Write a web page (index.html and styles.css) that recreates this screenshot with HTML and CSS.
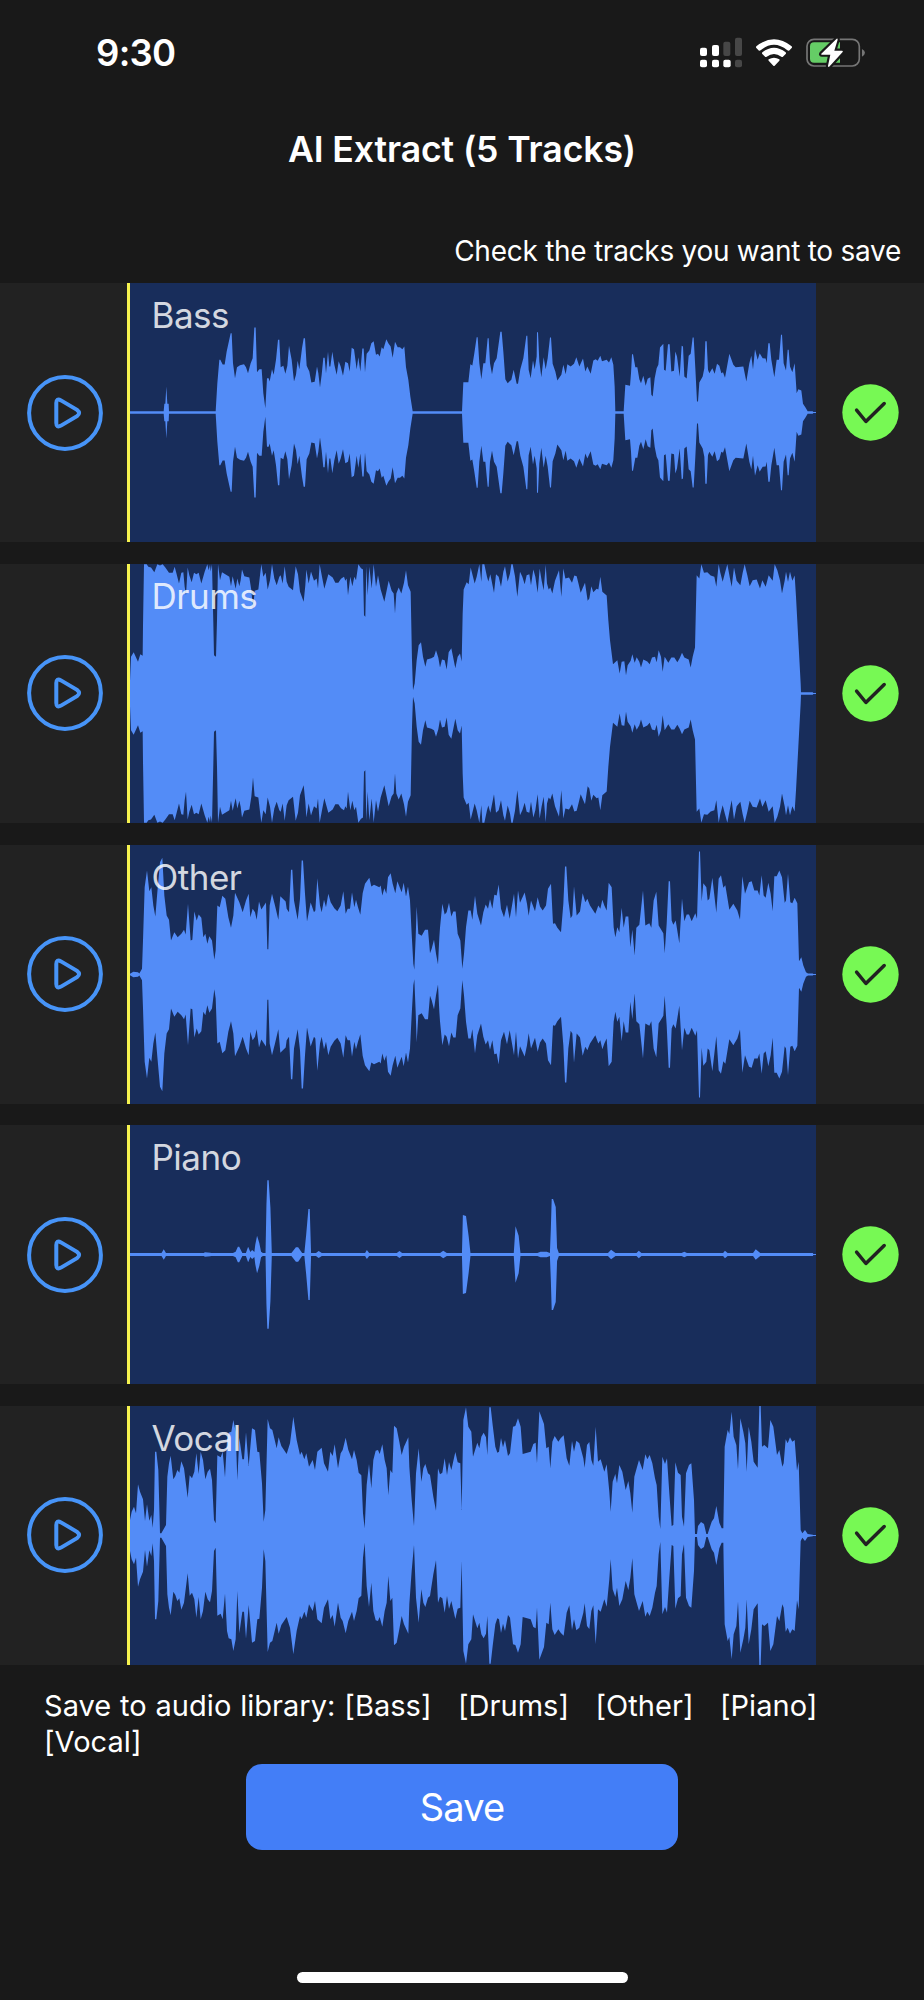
FILE: index.html
```html
<!DOCTYPE html>
<html lang="en">
<head>
<meta charset="utf-8">
<title>AI Extract</title>
<link rel="stylesheet" href="styles.css">
</head>
<body>
<div class="screen">
  <header class="status">
    <span class="time">9:30</span>
    <div class="status-icons">
      <svg class="signal" viewBox="60 50 126 93">
        <g fill="#fff"><rect x="60" y="82" width="21" height="25" rx="6"/><rect x="96" y="74" width="21" height="33" rx="6"/><rect x="60" y="118" width="21" height="23" rx="6"/><rect x="96" y="118" width="21" height="23" rx="6"/><rect x="130" y="118" width="22" height="23" rx="6"/></g>
        <g fill="#474747"><rect x="130" y="64" width="21" height="43" rx="6"/><rect x="165" y="52" width="21" height="55" rx="6"/><rect x="165" y="118" width="21" height="23" rx="6"/></g>
      </svg>
      <svg class="wifi" viewBox="228 50 108 93" fill="#fff">
        <path d="M229 78Q282 36 335 78Q337 81 335 83L327 91Q325 92 322 90Q282 57 242 90Q239 92 237 91L229 83Q227 81 229 78Z"/>
        <path d="M247 96Q282 69 317 96Q319 99 317 101L308 110Q306 111 304 109Q282 93 260 109Q258 111 256 110L247 101Q245 99 247 96Z"/>
        <path d="M266 117Q282 107 298 117Q300 119 298 121L284 136Q282 138 280 136L266 121Q264 119 266 117Z"/>
      </svg>
      <svg class="battery" viewBox="378 50 178 93">
        <rect x="381" y="57" width="157" height="80" rx="21" fill="none" stroke="#767676" stroke-width="5"/>
        <path d="M546 86Q555 91 555 97T546 109Z" fill="#767676"/>
        <path d="M402 66H480V127H402Q390 127 390 115V78Q390 66 402 66Z" fill="#65cd66"/>
        <path d="M470 55L424 100Q422 103 426 103H451L444 137Q445 142 449 138L488 95Q490 91 486 91H463L473 58Q473 53 470 55Z" fill="#fff" stroke="#191919" stroke-width="13" stroke-linejoin="round" paint-order="stroke"/>
      </svg>
    </div>
  </header>
  <h1 class="title">AI Extract (5 Tracks)</h1>
  <p class="hint">Check the tracks you want to save</p>
  <main class="tracks" id="tracks"></main>
  <footer class="footer">
    <p class="selection">Save to audio library: [Bass]&nbsp;&nbsp; [Drums]&nbsp;&nbsp; [Other]&nbsp;&nbsp; [Piano]&nbsp;&nbsp; [Vocal]</p>
    <button class="save">Save</button>
  </footer>
  <div class="home"></div>
</div>
<template id="track">
  <section class="track">
    <div class="play"><svg viewBox="0 0 76 76" fill="none" stroke="#4794f8" stroke-width="4"><circle cx="38" cy="38" r="35.9"/><path d="M29.3 28.1V47.9Q29.3 53.2 34 50.6L50 41.2Q54.2 38 50 34.8L34 25.4Q29.3 22.8 29.3 28.1Z"/></svg></div>
    <div class="playhead"></div>
    <div class="clip"><svg class="wave" viewBox="0 0 2058 777" preserveAspectRatio="none"><path fill="#538cf7"/></svg><span class="name"></span></div>
    <div class="check"><svg viewBox="0 0 57 57"><circle cx="28.5" cy="28.5" r="28.2" fill="#77f954"/><path d="M14.6 26.2L23.9 37.5L42.2 19.5" fill="none" stroke="#222" stroke-width="3.5" stroke-linecap="round" stroke-linejoin="round"/></svg></div>
  </section>
</template>
<script src="waves.js"></script>
</body>
</html>
```
FILE: styles.css
```css
body { margin: 0; background: #191919; color: #fff; font-family: Inter, "Liberation Sans", sans-serif; }
.screen { width: 924px; height: 2000px; display: flex; flex-direction: column; overflow: hidden; }
.status { display: flex; justify-content: space-between; align-items: flex-start; height: 98px; padding: 30px 59px 0 96px; }
.time { font-size: 36.5px; line-height: 46px; font-weight: 600; letter-spacing: -0.7px; }
.status-icons { display: flex; gap: 14px; padding-top: 6.7px; }
.status-icons svg { height: 31px; display: block; }
.signal { width: 42px; }
.wifi { width: 36px; }
.battery { width: 59.3px; }
.title { margin: 0; font-size: 35.6px; line-height: 44px; font-weight: 600; text-align: center; letter-spacing: -0.1px; }
.hint { margin: 61.3px 23px 13.9px; font-size: 28px; line-height: 36px; text-align: right; white-space: nowrap; letter-spacing: -0.27px; }
.tracks { display: flex; flex-direction: column; gap: 21.7px; }
.track { display: grid; grid-template-columns: 127px 3px 686px 108px; height: 259px; background: #222; }
.play { display: flex; align-items: center; padding-left: 27px; }
.play svg { width: 76px; height: 76px; }
.playhead { background: #f6f34f; }
.clip { position: relative; background: #182d5b; }
.wave { display: block; width: 686px; height: 259px; }
.name { position: absolute; left: 21.5px; top: 10.2px; font-size: 35px; line-height: 44px; letter-spacing: -0.5px; color: rgba(255, 255, 255, 0.82); }
.check { display: flex; align-items: center; justify-content: center; }
.check svg { width: 57px; height: 57px; }
.footer { display: flex; flex-direction: column; align-items: center; padding-top: 22.8px; }
.selection { align-self: stretch; margin: 0 60px 4px 44px; font-size: 29px; line-height: 36px; letter-spacing: 0.04px; word-spacing: 0.6px; }
.save { width: 432px; height: 86px; border: 0; border-radius: 16px; background: #437ef7; color: #fff; font: 400 38px/46px Inter, "Liberation Sans", sans-serif; letter-spacing: -0.9px; }
.home { width: 331px; height: 11px; border-radius: 6px; background: #fff; margin: auto auto 17px; }
```
FILE: waves.js
```javascript
// Envelope points are "x,y" pairs of the upper edge; the lower edge mirrors them around mid.
const tracks = [
  { name: "Bass", mid: 398, parts: [
    { dx: -390, sx: 1, p: "390,394 491,394 493,372 496,372 499,320 502,372 506,372 507,394 647,394 652,310 658,240 661,240 668,254 674,254 680,215 692,160 695,160 699,250 705,295 711,262 720,256 732,253 738,262 744,280 752,250 758,235 763,143 767,143 771,277 778,268 785,268 790,340 796,385 801,295 806,295 809,305 816,268 821,285 828,240 834,180 838,180 842,262 850,258 856,282 862,258 867,198 875,240 882,305 888,285 893,243 898,268 906,205 911,175 915,175 920,258 928,275 934,308 944,306 951,260 955,280 960,323 965,285 970,234 974,234 978,280 984,216 988,260 991,260 997,216 1003,255 1010,285 1016,244 1022,260 1029,288 1036,246 1044,250 1049,275 1055,204 1062,208 1070,268 1075,232 1081,275 1087,206 1091,206 1095,277 1100,222 1108,212 1114,190 1121,184 1128,225 1134,222 1139,230 1145,202 1150,208 1159,178 1165,190 1172,200 1178,234 1185,186 1193,202 1200,202 1207,208 1213,200 1218,262 1225,300 1231,350 1238,394" },
    { dx: 930, sx: 1, p: "0,394 66,394 70,307 85,307 91,253 97,257 103,220 110,172 113,172 118,250 124,298 130,250 136,250 143,175 146,175 150,250 156,283 162,250 170,235 181,156 185,156 190,215 196,298 203,310 214,300 221,270 230,312 234,312 241,268 250,235 259,168 262,168 266,270 272,295 279,242 284,268 290,230 291,157 294,157 298,245 304,292 311,232 317,268 323,235 330,173 333,173 338,252 346,275 352,302 364,285 370,255 377,283 382,253 392,260 402,252 409,232 418,260 429,236 436,275 442,260 452,282 460,242 467,238 473,243 481,228 486,244 500,240 507,248 514,232 520,255 524,320 526,394 551,394 556,315 570,318 573,280 576,223 579,223 586,262 592,262 598,298 603,310 610,288 617,318 623,297 631,292 634,345 638,350 644,295 650,265 655,255 660,203 670,192 672,270 677,273 684,193 689,193 694,275 702,273 706,215 711,230 719,290 725,198 729,200 733,290 740,296 746,228 752,222 758,173 761,173 766,265 771,365 774,365 778,308 788,290 793,265 796,184 800,184 804,270 808,280 817,265 824,282 831,252 838,258 844,280 849,277 855,294 868,222 880,255 887,262 910,260 919,305 928,250 934,228 939,268 945,208 953,240 959,220 968,235 977,236 980,250 985,190 989,190 994,240 1003,292 1010,240 1017,240 1023,165 1026,165 1031,250 1038,272 1043,210 1046,210 1050,260 1057,277 1064,250 1070,340 1075,328 1084,332 1089,372 1096,382 1103,394 1118,394 1120,396.5 1128,396.5" }
  ] },
  { name: "Drums", mid: 400, parts: [
    { dx: -30, sx: 1, p: "30,362 33,290 41,276 54,305 61,282 68,287 69,195 72,12 80,12 85,20 93,22 103,36 112,12 120,16 128,12 136,22 147,38 158,38 164,20 170,42 177,70 184,38 190,36 194,80 198,105 203,22 208,45 215,66 222,38 229,42 236,38 244,70 254,35 262,12 266,30 270,14 272,34 276,12 280,190 282,285 288,290 291,180 294,12 297,35 300,60 306,36 322,46 328,50 333,78 338,48 347,86 352,55 358,78 362,60 366,28 373,48 388,52 394,90 399,148 404,92 415,88 420,45 424,12 430,50 437,38 443,88 450,60 456,12 463,55 470,75 478,50 482,45 488,70 494,18 500,65 506,80 519,90 527,18 534,42 540,95 551,125 556,75 559,28 566,70 573,34 582,62 590,55 594,85 599,12 606,50 613,86 625,42 638,52 646,68 655,68 663,56 672,50 676,62 680,55 684,105 691,50 697,78 703,50 708,60 715,12 723,24 729,28 732,165 736,170 739,18 743,105 748,20 755,85 761,12 768,80 774,45 782,88 793,125 806,62 815,92 821,100 825,160 829,100 836,82 844,100 852,68 858,30 864,75 872,95 876,300 879,390 884,370 890,300 896,255 903,246 909,290 916,320 921,298 934,294 942,290 948,270 955,293" },
    { dx: 930, sx: 1, p: "0,322 6,298 14,300 20,328 26,276 34,264 40,294 46,324 53,290 60,280 65,304 68,160 71,88 80,66 86,72 92,22 104,70 110,50 118,12 124,65 127,12 133,12 141,50 145,64 151,42 162,98 168,42 176,50 183,80 190,35 195,18 203,64 210,40 214,12 218,12 225,48 232,110 240,35 247,50 254,72 260,45 268,42 273,75 280,28 286,50 293,98 299,25 305,62 311,90 317,14 321,70 326,88 331,82 337,100 345,62 357,30 364,110 370,25 376,55 387,52 396,68 403,46 410,48 416,72 422,98 435,68 443,122 448,115 454,78 460,96 470,86 475,88 481,50 487,95 500,106 505,180 510,240 519,312 532,300 539,340 545,305 553,303 558,345 563,315 572,302 577,282 584,308 590,291 598,305 603,322 610,298 622,304 629,312 636,292 645,290 650,306 656,270 663,290 668,335 674,290 685,308 694,292 703,292 712,306 719,294 726,278 733,292 746,298 752,322 758,290 765,262 770,45 778,55 784,12 792,38 802,36 812,46 823,50 829,80 836,12 841,38 848,65 855,38 862,12 870,55 875,80 882,22 890,62 901,75 908,38 914,12 922,45 929,78 938,60 950,58 960,85 967,60 977,80 986,45 998,62 1004,12 1012,30 1020,60 1026,100 1034,62 1038,35 1044,65 1050,35 1057,62 1064,46 1068,110 1075,240 1082,370 1083,396 1118,396 1120,398.5 1128,398.5" }
  ] },
  { name: "Other", mid: 402, parts: [
    { dx: -30, sx: 1, p: "30,400 40,394 54,395 58,399 66,385 69,300 74,140 81,90 88,152 94,140 100,195 106,228 112,155 120,65 127,52 133,165 140,225 147,238 153,300 163,275 173,290 184,280 192,268 197,282 204,190 212,300 217,298 223,213 230,240 236,222 244,232 250,290 256,280 262,310 268,287 276,300 283,358 287,330 292,195 299,200 307,166 316,175 325,230 333,262 340,225 345,157 358,185 368,215 378,180 386,160 391,230 398,205 405,215 410,238 417,183 424,207 438,186 442,326 445,326 449,195 456,160 465,195 475,238 481,167 497,183 500,205 507,215 513,88 517,88 522,180 533,238 540,175 545,60 549,60 555,160 561,243 572,186 582,215 586,210 592,113 600,195 605,215 612,178 618,200 625,160 632,185 643,203 652,212 662,195 670,152 677,220 683,205 690,205 696,155 703,200 708,178 714,200 721,223 728,158 735,130 748,112 754,138 762,133 778,140 782,135 787,165 793,143 799,160 804,110 812,98 818,130 826,158 832,122 845,155 851,127 858,168 864,138 870,180 875,280 880,370 883,388 887,290 890,198 895,280 905,286 915,268 924,268 930,338 935,325 942,298 948,340 954,372 958,290" },
    { dx: 930, sx: 1, p: "0,262 7,190 14,222 20,215 27,187 34,228 40,213 47,213 53,280 61,300 67,385 72,340 78,260 85,210 92,210 97,238 105,166 112,220 123,255 130,215 137,192 144,205 150,176 157,205 163,163 170,165 176,132 183,205 192,230 201,193 209,235 216,195 222,160 228,230 234,150 240,187 254,156 261,190 266,226 273,180 285,212 293,170 300,198 308,210 318,195 324,145 333,130 339,250 345,248 352,262 363,275 370,190 375,78 379,78 385,180 392,233 397,225 402,137 410,225 420,213 428,158 436,185 442,175 450,195 466,220 475,195 481,205 487,178 493,195 500,210 506,127 515,140 521,260 526,290 532,260 538,275 545,202 551,262 557,228 565,228 571,320 577,268 584,345 589,262 598,253 609,150 616,255 628,248 634,262 641,180 649,154 656,255 670,278 674,338 680,250 686,122 690,122 695,240 700,253 707,240 718,308 726,174 733,242 740,222 747,222 755,242 766,218 771,235 777,33 780,33 785,182 790,128 799,140 803,180 808,175 817,112 829,217 836,115 843,104 850,142 856,134 868,208 880,190 892,210 900,237 907,107 915,160 927,125 935,122 943,150 953,150 958,165 965,104 971,165 977,172 985,127 992,160 998,212 1003,107 1010,107 1018,90 1026,110 1034,187 1038,180 1044,100 1051,185 1057,188 1064,172 1072,188 1077,362 1084,350 1090,375 1098,395 1104,399 1118,399 1120,400.5 1128,400.5" }
  ] },
  { name: "Piano", mid: 404.5, parts: [
    { dx: -30, sx: 1.3393, p: "22,400 93,400 98,389 103,400 188,400 190,398 202,399 204,400 253,400 259,396 264,381 267,381 274,400 282,400 287,381 292,397 296,391 301,397 303,375 307,348 312,370 316,396 320,400 326,400 328,255 330,182 333,182 337,265 340,400 384,400 394,383 399,383 408,400 413,400 417,345 422,268 425,268 428,400 439,400 445,394 452,400 549,400 553,391 558,400 620,400 626,394 632,400 717,400 724,393 732,400 766,400 768,286 775,289 781,350 785,400 882,400 886,320 893,348 897,400 935,400 942,396 956,396 963,400 965,330 967,238 970,238 976,262 979,385 983,400 1093,400 1100,390 1110,400 1157,400 1162,393 1168,400 1258,400 1264,396 1270,400 1351,400 1355,393 1361,400 1418,400 1424,389 1434,400 1552,400 1553,403 1559,403" }
  ] },
  { name: "Vocal", mid: 406.5, parts: [
    { dx: -30, sx: 1, p: "30,360 35,335 42,320 48,340 54,253 60,275 69,298 75,363 81,313 88,362 94,345 98,383 102,330 105,155 109,155 115,210 120,400 124,400 138,375 142,230 147,190 152,167 160,238 166,228 172,210 178,218 184,184 192,205 203,293 209,226 216,235 223,215 229,160 236,222 242,155 249,180 256,238 263,215 270,206 276,240 282,360 287,370 292,166 302,172 308,155 315,232 321,120 326,98 334,95 340,60 347,95 352,240 358,113 367,178 372,178 378,97 386,198 396,85 405,90 412,155 418,157 426,250 431,365 436,330 443,57 450,85 457,90 470,145 476,112 484,138 500,162 510,130 520,50 530,120 540,165 545,155 553,178 559,160 567,200 578,180 585,210 592,155 605,143 612,190 624,215 631,155 638,168 644,133 654,205 662,160 668,150 677,113 685,150 696,178 702,150 710,180 716,218 724,226 729,340 734,385 740,255 747,192 754,265 760,180 767,152 774,150 779,162 787,133 794,180 800,205 805,285 811,210 817,220 822,77 830,85 838,125 845,165 852,140 865,112 868,200 875,300 882,378 888,220 896,145 904,245 910,205 916,192 924,220 930,225 940,290 948,332 954,205" },
    { dx: 930, sx: 1, p: "0,223 7,218 14,175 21,225 27,186 34,210 46,156 53,187 61,190 65,330 70,60 78,22 85,80 94,95 99,170 112,128 118,145 124,110 131,98 138,112 142,165 148,22 152,22 158,75 166,140 172,158 177,155 183,114 189,142 195,120 204,168 210,160 219,80 226,78 234,55 242,80 248,162 272,155 280,132 287,128 291,190 298,34 312,72 319,145 326,140 331,205 337,125 344,108 355,125 362,115 371,106 380,175 388,197 396,123 402,155 409,122 418,130 430,175 434,203 441,135 448,126 454,180 460,197 467,80 474,185 482,178 493,215 500,193 508,275 512,335 518,245 526,222 531,250 538,195 547,215 557,270 565,243 571,280 577,338 583,230 590,205 597,180 608,210 616,163 622,178 629,165 637,190 645,235 650,255 656,350 661,387 667,170 675,192 681,175 688,280 695,378 700,375 706,187 714,218 722,225 726,350 732,380 738,220 747,195 754,190 762,300 765,402 771,402 774,378 783,366 792,372 799,402 803,402 815,365 822,355 829,318 838,368 845,385 850,385 854,140 863,90 868,102 875,35 881,110 889,135 894,208 901,55 910,95 916,130 920,215 926,80 934,125 941,185 953,203 958,18 962,18 966,140 973,135 984,145 991,60 1000,80 1011,165 1018,150 1027,200 1031,190 1037,118 1043,130 1050,112 1057,125 1064,120 1071,212 1076,185 1082,390 1087,400 1095,390 1103,402 1118,404 1120,405 1128,405" }
  ] }
];

const list = document.getElementById("tracks");
const template = document.getElementById("track");
for (const track of tracks) {
  const points = track.parts.flatMap(({ dx, sx, p }) => p.split(" ").map(pair => {
    const [x, y] = pair.split(",").map(Number);
    return [x * sx + dx, track.mid - y];
  }));
  const top = points.map(([x, a]) => `${x.toFixed(1)} ${(388.5 - a).toFixed(1)}`);
  const bottom = points.map(([x, a]) => `${x.toFixed(1)} ${(388.5 + a).toFixed(1)}`).reverse();
  const row = template.content.cloneNode(true);
  row.querySelector(".wave path").setAttribute("d", `M${top.concat(bottom).join("L")}Z`);
  row.querySelector(".name").textContent = track.name;
  list.append(row);
}
```
